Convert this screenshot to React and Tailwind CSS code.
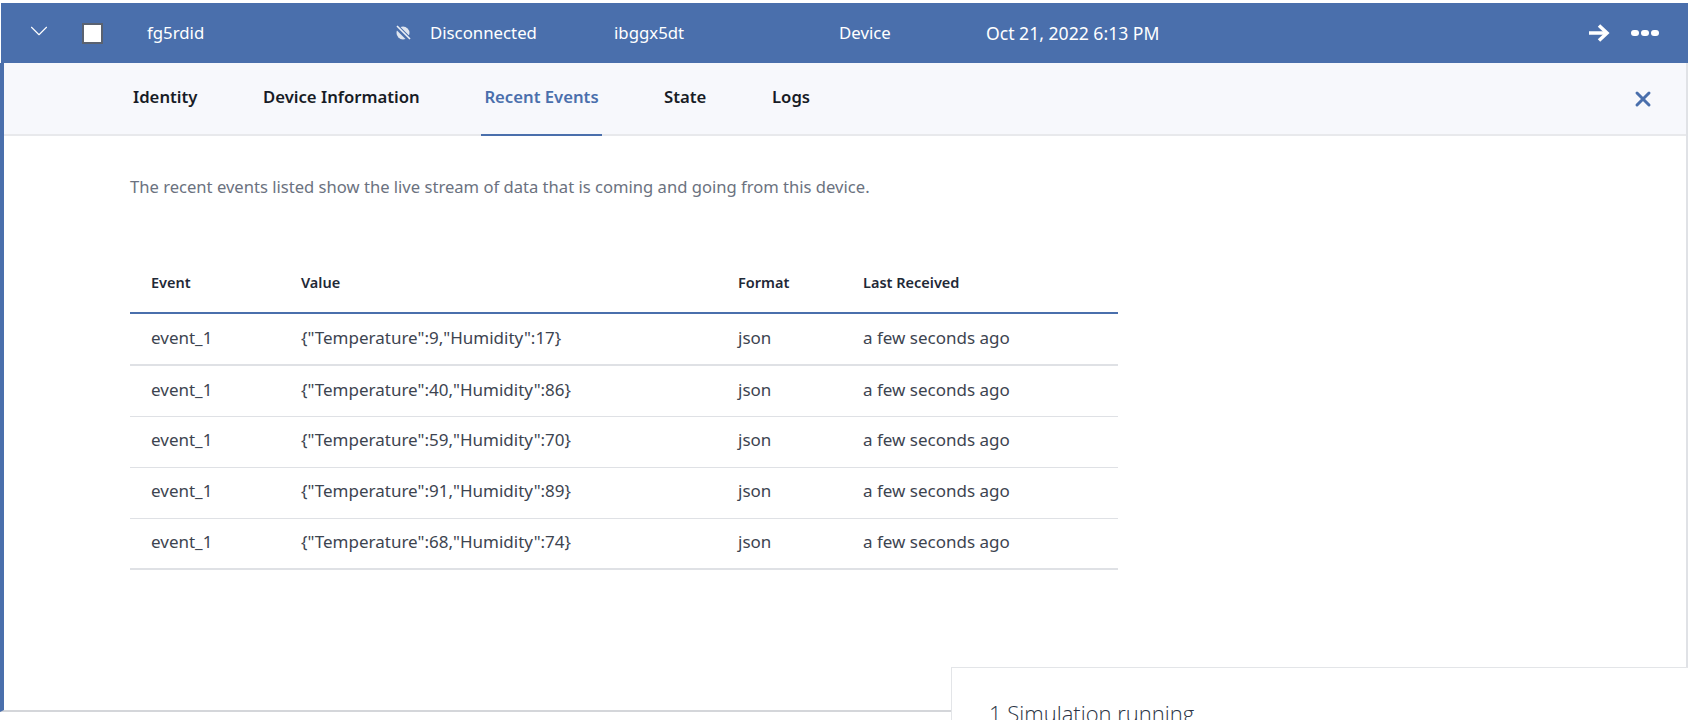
import React from 'react';
import { ChevronDown, X } from 'lucide-react';

const rows = [
    '{"Temperature":9,"Humidity":17}',
    '{"Temperature":40,"Humidity":86}',
    '{"Temperature":59,"Humidity":70}',
    '{"Temperature":91,"Humidity":89}',
    '{"Temperature":68,"Humidity":74}',
];

const tabs = [
    { label: 'Identity', width: 'w-[130px]' },
    { label: 'Device Information', width: 'w-[218px]' },
    { label: 'Recent Events', width: 'w-[183px]', active: true },
    { label: 'State', width: 'w-[108px]' },
    { label: 'Logs', width: 'w-[100px]' },
];

const fontStack = { fontFamily: '"Noto Sans", sans-serif' };

const App = () => {
    return (
        <div className="relative h-[720px] w-[1688px] overflow-hidden bg-white pt-[3px] text-[#3d4450]" style={fontStack}>
            {/* device row */}
            <div className="ml-px flex h-[60px] items-center bg-[#4a6fac] text-[16.8px] text-white">
                <div className="-mt-[4px] flex w-[81px] pl-[23px]">
                    <ChevronDown size={30} strokeWidth={0.9} />
                </div>
                <div className="h-[21px] w-[21px] border-2 border-[#5a6270] bg-white" />
                <div className="w-[292px] pl-[44px]">fg5rdid</div>
                <div className="flex w-[219px] items-center">
                    <svg width="20" height="20" viewBox="0 0 20 20" className="ml-[-2px] mr-[17px] shrink-0">
                        <circle cx="10" cy="10" r="6.5" fill="#dfe5ef" />
                        <path d="M3 3 L17 17" stroke="#4a6fac" strokeWidth="5" />
                        <path d="M4 3 L17 16" stroke="#eef1f6" strokeWidth="1.6" />
                    </svg>
                    <span>Disconnected</span>
                </div>
                <div className="w-[225px]">ibggx5dt</div>
                <div className="w-[147px]">Device</div>
                <div className="text-[17.6px]">Oct 21, 2022 6:13 PM</div>
                <div className="ml-auto flex items-center gap-[21px] pr-[29px]">
                    <svg width="22" height="20" viewBox="0 0 22 20" fill="none" stroke="white" strokeWidth="3.5">
                        <path d="M1 10 H19" />
                        <path d="M11 2.5 L19 10 L11 17.5" />
                    </svg>
                    <div className="flex gap-[2px]">
                        <span className="h-[6px] w-[8px] rounded-full bg-white" />
                        <span className="h-[6px] w-[8px] rounded-full bg-white" />
                        <span className="h-[6px] w-[8px] rounded-full bg-white" />
                    </div>
                </div>
            </div>

            {/* expanded panel */}
            <div className="h-[649px] border-b-2 border-r-2 border-b-[#d4d6da] border-r-[#e0e2e6] border-l-4 border-l-[#4a6fac]">
                <div className="flex h-[73px] items-stretch border-b-2 border-[#e8e9ec] bg-[#f7f8fc] pl-[129px]">
                    {tabs.map((tab) => (
                        <div key={tab.label} className={tab.width}>
                            <div className={`flex h-[73px] items-center border-b-2 pb-[3px] text-[16.7px] font-semibold ${tab.active ? 'w-[121px] justify-center border-[#4a6fac] text-[#4a6fac]' : 'border-transparent text-[#171c26]'}`}>
                                {tab.label}
                            </div>
                        </div>
                    ))}
                    <div className="ml-auto flex items-center pr-[31px] text-[#4a6fac]">
                        <X size={24} strokeWidth={3} />
                    </div>
                </div>

                <div className="pl-[126px]">
                    <p className="mt-[39px] text-[16.6px] leading-[24px] text-[#6b7280]">
                        The recent events listed show the live stream of data that is coming and going from this device.
                    </p>

                    <table className="mt-[54px] w-[988px] table-fixed border-collapse text-[17px]">
                        <thead>
                            <tr className="h-[60px] border-b-2 border-[#4a6fac] text-left text-[14.5px] text-[#1f2937]">
                                <th className="w-[171px] pl-[21px] font-semibold">Event</th>
                                <th className="w-[437px] font-semibold">Value</th>
                                <th className="w-[125px] font-semibold">Format</th>
                                <th className="font-semibold">Last Received</th>
                            </tr>
                        </thead>
                        <tbody>
                            {rows.map((value, i) => (
                                <tr key={value} className={`${i === 0 ? 'h-[52px]' : 'h-[51px]'} ${i === 0 || i === rows.length - 1 ? 'border-b-2 border-[#dfe1e5]' : 'border-b border-[#dfe1e5]'}`}>
                                    <td className="pb-[3px] pl-[21px]">event_1</td>
                                    <td className="pb-[3px]">{value}</td>
                                    <td className="pb-[3px]">json</td>
                                    <td className="pb-[3px]">a few seconds ago</td>
                                </tr>
                            ))}
                        </tbody>
                    </table>
                </div>
            </div>

            {/* simulation card */}
            <div className="absolute left-[951px] top-[667px] h-[80px] w-[737px] border-l border-t border-[#e3e5e8] bg-white pl-[37px] pt-[30px] text-[22px] font-light leading-[30px] text-[#2b3445]" style={{ fontFamily: '"Open Sans", sans-serif' }}>
                1 Simulation running
            </div>
        </div>
    );
};

export default App;
